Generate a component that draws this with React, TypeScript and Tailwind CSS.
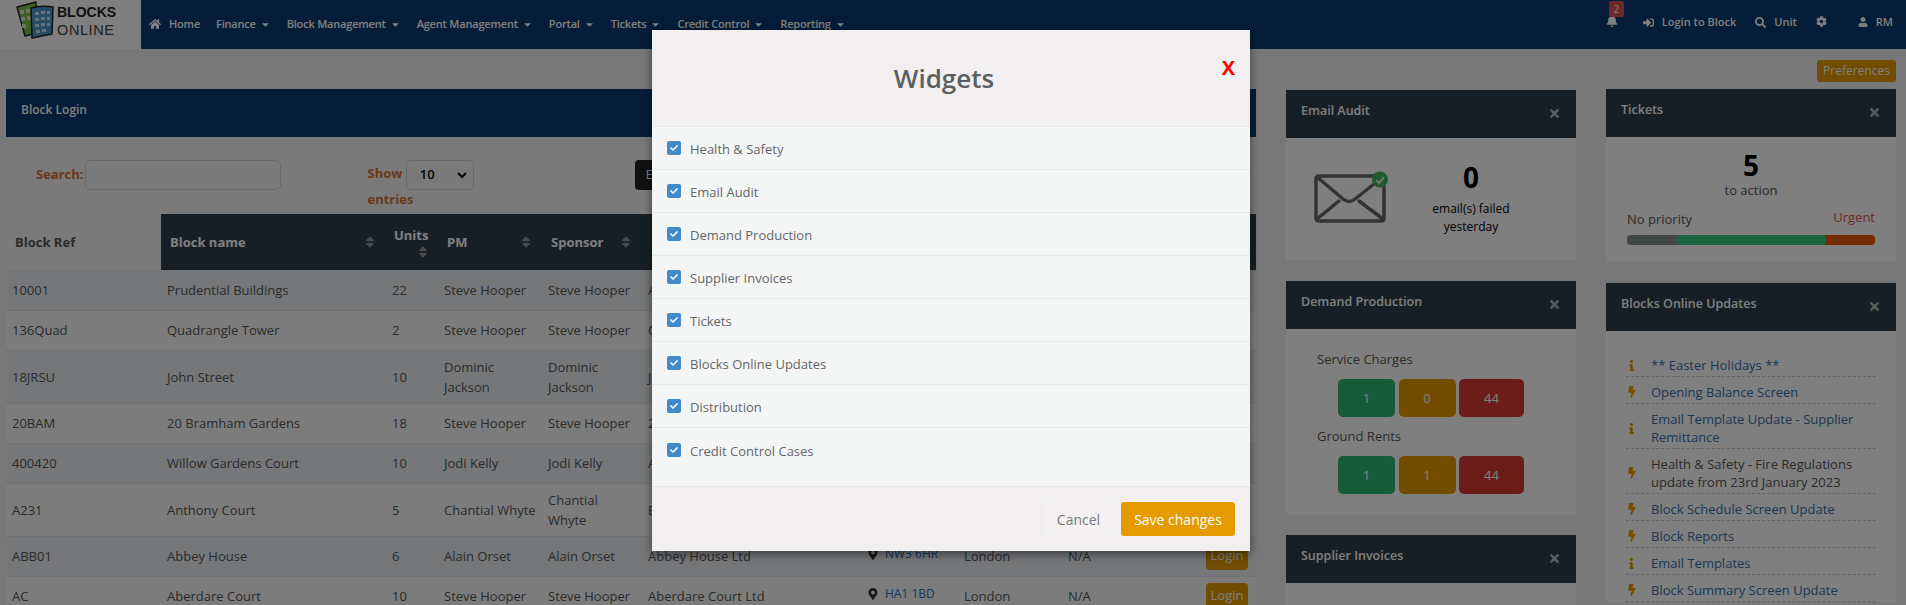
import React from "react"
import {
  FaBell,
  FaBolt,
  FaCaretDown,
  FaCheck,
  FaCog,
  FaHome,
  FaInfo,
  FaMapMarkerAlt,
  FaSearch,
  FaSignInAlt,
  FaSort,
  FaTimes,
  FaUser,
} from "react-icons/fa"

const navItems = [
  "Finance",
  "Block Management",
  "Agent Management",
  "Portal",
  "Tickets",
  "Credit Control",
  "Reporting",
]

const rows = [
  { ref: "10001", name: "Prudential Buildings", units: "22", pm: "Steve Hooper", sponsor: "Steve Hooper", company: "A" },
  { ref: "136Quad", name: "Quadrangle Tower", units: "2", pm: "Steve Hooper", sponsor: "Steve Hooper", company: "Q" },
  { ref: "18JRSU", name: "John Street", units: "10", pm: "Dominic Jackson", sponsor: "Dominic Jackson", company: "J C" },
  { ref: "20BAM", name: "20 Bramham Gardens", units: "18", pm: "Steve Hooper", sponsor: "Steve Hooper", company: "2" },
  { ref: "400420", name: "Willow Gardens Court", units: "10", pm: "Jodi Kelly", sponsor: "Jodi Kelly", company: "A" },
  { ref: "A231", name: "Anthony Court", units: "5", pm: "Chantial Whyte", sponsor: "Chantial Whyte", company: "E" },
  { ref: "ABB01", name: "Abbey House", units: "6", pm: "Alain Orset", sponsor: "Alain Orset", company: "Abbey House Ltd", postcode: "NW3 6HR", city: "London", other: "N/A" },
  { ref: "AC", name: "Aberdare Court", units: "10", pm: "Steve Hooper", sponsor: "Steve Hooper", company: "Aberdare Court Ltd", postcode: "HA1 1BD", city: "London", other: "N/A" },
]

const widgets = [
  "Health & Safety",
  "Email Audit",
  "Demand Production",
  "Supplier Invoices",
  "Tickets",
  "Blocks Online Updates",
  "Distribution",
  "Credit Control Cases",
]

const updates = [
  { icon: "info", text: "** Easter Holidays **", link: true },
  { icon: "bolt", text: "Opening Balance Screen", link: true },
  { icon: "info", text: "Email Template Update - Supplier Remittance", link: true },
  { icon: "bolt", text: "Health & Safety - Fire Regulations update from 23rd January 2023", link: false },
  { icon: "bolt", text: "Block Schedule Screen Update", link: true },
  { icon: "bolt", text: "Block Reports", link: true },
  { icon: "info", text: "Email Templates", link: true },
  { icon: "bolt", text: "Block Summary Screen Update", link: true },
]

const Logo = () => (
  <div className="flex w-[141px] shrink-0 items-start bg-white pl-[16px]">
    <svg width="38" height="38" viewBox="0 0 38 38" className="mt-px shrink-0">
      <path d="M1 6 L20 1 L22 32 L9 35 Z" fill="#7cc04b" stroke="#222" strokeWidth="1.5" strokeLinejoin="round" />
      <path d="M4 9 h4 v4 h-4z M10 8 h4 v4 h-4z M5 16 h4 v4 h-4z M11 15 h4 v4 h-4z M6 23 h4 v4 h-4z" fill="#dfe9cf" />
      <path d="M15 7 Q26 4 37 6 L36 33 Q25 35 16 37 Z" fill="#4a9bd0" stroke="#222" strokeWidth="1.5" strokeLinejoin="round" />
      <path d="M19 11 h4 v3 h-4z M25 10 h4 v3 h-4z M31 10 h3 v3 h-3z M19 17 h4 v3 h-4z M25 16 h4 v3 h-4z M31 16 h3 v3 h-3z M19 23 h4 v3 h-4z M25 22 h4 v3 h-4z M31 22 h3 v3 h-3z M20 29 h4 v3 h-4z M26 28 h4 v3 h-4z" fill="#cfe3f1" />
    </svg>
    <div className="ml-[3px] mt-[4px] font-['Liberation_Sans',sans-serif] text-[#222]">
      <div className="text-[14px] leading-[17px] font-bold">BLOCKS</div>
      <div className="text-[14.5px] leading-[18px] tracking-[0.6px] text-[#444]">ONLINE</div>
    </div>
  </div>
)

const NavBar = () => (
  <header className="flex h-[49px] bg-[#0b3b73] text-white">
    <Logo />
    <nav className="flex items-start gap-4 pl-[8px] pt-[15px] text-[11px] leading-[18px] font-semibold tracking-[-0.2px]">
      <span className="flex items-center gap-2">
        <FaHome className="text-[12px]" />
        Home
      </span>
      {navItems.map((item) => (
        <span key={item} className="flex items-center gap-[4px]">
          {item}
          <FaCaretDown className="text-[11px]" />
        </span>
      ))}
    </nav>
    <div className="ml-auto flex items-start pr-[13px] pt-[13px] text-[11px] leading-[18px] font-semibold">
      <span className="relative mt-[2px] mr-[25px]">
        <FaBell className="text-[12px]" />
        <span className="absolute -top-[14px] left-[3px] flex h-[16px] w-[15px] items-center justify-center rounded-[2px] bg-[#d9534f] text-[10px] font-normal">
          2
        </span>
      </span>
      <span className="flex items-center gap-[8px]">
        <FaSignInAlt className="text-[11px]" />
        Login to Block
      </span>
      <span className="ml-[19px] flex items-center gap-[8px]">
        <FaSearch className="text-[11px]" />
        Unit
      </span>
      <FaCog className="mt-[3px] ml-[19px] text-[11px]" />
      <span className="ml-[31px] flex items-center gap-[8px]">
        <FaUser className="text-[10px]" />
        RM
      </span>
    </div>
  </header>
)

const SortHeader = ({ label, width }: { label: string; width: string }) => (
  <th className={`${width} bg-[#303f49] px-[9px] text-left font-bold text-white`}>
    <div className="flex items-center justify-between">
      {label}
      <FaSort className="text-[14px] text-[#999]" />
    </div>
  </th>
)

const BlockLogin = () => (
  <section className="ml-[6px] w-[1250px] shrink-0 bg-[#f4f4f4]">
    <div className="h-[48px] bg-[#0b3b73] pl-[15px] pt-[11px] text-[12px] leading-[20px] font-semibold text-white">
      Block Login
    </div>
    <div className="flex h-[77px] pl-[30px] pt-[23px] text-[13px] font-bold text-[#e0702a]">
      <label className="flex h-[30px] items-center">
        Search:
        <input className="ml-px h-[30px] w-[196px] rounded-[5px] border border-[#ccd5e0] bg-[#f4f4f4]" />
      </label>
      <div className="ml-[87px] w-[120px]">
        Show{" "}
        <span className="inline-flex h-[30px] w-[68px] items-center justify-between rounded-[5px] border border-[#ccd5e0] pr-[6px] pl-[13px] align-middle text-[13px] font-semibold text-black">
          10
          <svg width="10" height="8" viewBox="0 0 10 8">
            <path d="M1 2 L5 6 L9 2" fill="none" stroke="#000" strokeWidth="2" />
          </svg>
        </span>
        <span className="block">entries</span>
      </div>
      <button className="ml-[147px] h-[30px] w-[70px] rounded-[4px] bg-[#222] pl-[11px] text-left font-normal text-white">
        Export
      </button>
    </div>
    <table className="w-full table-fixed border-collapse font-['Open_Sans',sans-serif] text-[13px] leading-[20px] text-[#555]">
      <thead>
        <tr className="h-[56px]">
          <th className="w-[155px] px-[9px] text-left font-bold text-[#555]">Block Ref</th>
          <SortHeader label="Block name" width="w-[225px]" />
          <th className="w-[52px] bg-[#303f49] px-[8px] text-left font-bold text-white">
            Units
            <FaSort className="ml-auto text-[14px] text-[#999]" />
          </th>
          <SortHeader label="PM" width="w-[104px]" />
          <SortHeader label="Sponsor" width="w-[100px]" />
          <th className="w-[222px] bg-[#303f49]" />
          <th className="w-[94px] bg-[#303f49]" />
          <th className="w-[104px] bg-[#303f49]" />
          <th className="w-[133px] bg-[#303f49]" />
          <th className="bg-[#303f49]" />
        </tr>
      </thead>
      <tbody>
        {rows.map((row, index) => (
          <tr
            key={row.ref}
            className={`border-t border-[#e0e3e6] ${index % 2 === 0 ? "bg-[#eaeef3]" : "bg-[#f9f9f9]"}`}
          >
            <td className="h-[40px] px-[6px] py-[6px]">{row.ref}</td>
            <td className="px-[6px] py-[6px]">{row.name}</td>
            <td className="px-[6px] py-[6px]">{row.units}</td>
            <td className="py-[6px] pl-[6px] pr-[2px]">{row.pm}</td>
            <td className="px-[6px] py-[6px]">{row.sponsor}</td>
            <td className="px-[6px] py-[6px]">{row.company}</td>
            <td className="px-[3px] py-[6px] text-[12px] text-[#2a6ebb]">
              {row.postcode && (
                <span className="flex items-center gap-[6px] pb-[4px]">
                  <FaMapMarkerAlt className="text-[12px] text-[#333]" />
                  {row.postcode}
                </span>
              )}
            </td>
            <td className="px-[6px] py-[6px]">{row.city}</td>
            <td className="px-[6px] py-[6px]">{row.other}</td>
            <td className="px-[6px] pt-[6px] align-top">
              {row.postcode && (
                <button className="ml-[5px] h-[27px] w-[42px] rounded-[4px] bg-[#e59a00] pb-[3px] text-white">Login</button>
              )}
            </td>
          </tr>
        ))}
      </tbody>
    </table>
  </section>
)

const Panel = ({
  title,
  className,
  children,
}: {
  title: string
  className?: string
  children: React.ReactNode
}) => (
  <section className={`w-[290px] bg-white ${className ?? ""}`}>
    <div className="relative h-[48px] bg-[#303f49] pl-[15px] pt-[11px] text-[12.5px] leading-[20px] font-semibold text-white">
      {title}
      <FaTimes className="absolute right-[15px] top-[17px] text-[13px] text-[#bbb]" />
    </div>
    {children}
  </section>
)

const EnvelopeIcon = () => (
  <svg width="78" height="56" viewBox="0 -4 78 56" className="shrink-0">
    <path
      d="M60 2 H5 Q2 2 2 5 V44 Q2 47 5 47 H67 Q70 47 70 44 V13 M3 3 L29 25 Q35 30 41 25 L60 10 M3 45 L25 27 M69 45 L45 27"
      fill="none"
      stroke="#666"
      strokeWidth="3.5"
      strokeLinecap="round"
    />
    <circle cx="66" cy="5.5" r="8" fill="#3cb45c" />
    <path d="M62 6 L65 9 L70 3" fill="none" stroke="#fff" strokeWidth="1.6" />
  </svg>
)

const EmailAudit = () => (
  <Panel title="Email Audit" className="h-[170px]">
    <div className="flex pl-[28px] pt-[32px]">
      <EnvelopeIcon />
      <div className="-mt-[15px] ml-[18px] w-[122px] text-center text-[12px] leading-[18px] text-black">
        <div className="text-[28px] leading-[44px] font-bold">0</div>
        <div className="pt-[1px]">email(s) failed yesterday</div>
      </div>
    </div>
  </Panel>
)

const CountButtons = ({ counts }: { counts: number[] }) => (
  <div className="ml-[52px] flex gap-[3.5px] text-[13px] text-white">
    <span className="flex h-[38px] w-[57px] items-center justify-center rounded-[5px] bg-[#2eb872]">{counts[0]}</span>
    <span className="flex h-[38px] w-[57px] items-center justify-center rounded-[5px] bg-[#e59a00]">{counts[1]}</span>
    <span className="flex h-[38px] w-[65px] items-center justify-center rounded-[5px] bg-[#d93a34]">{counts[2]}</span>
  </div>
)

const DemandProduction = () => (
  <Panel title="Demand Production" className="mt-[21px] h-[233px]">
    <div className="pl-[31px] pt-[20px] text-[13px] leading-[20px] text-[#555]">
      <div className="pb-[10px]">Service Charges</div>
      <div className="-ml-[31px]"><CountButtons counts={[1, 0, 44]} /></div>
      <div className="pb-[10px] pt-[9px]">Ground Rents</div>
      <div className="-ml-[31px]"><CountButtons counts={[1, 1, 44]} /></div>
    </div>
  </Panel>
)

const TicketsPanel = () => (
  <Panel title="Tickets" className="h-[173px]">
    <div className="px-[21px] pt-[10px] text-[13px] text-[#555]">
      <div className="text-center text-[28px] leading-[36px] font-bold text-black">5</div>
      <div className="-mt-[2px] text-center leading-[18px]">to action</div>
      <div className="mt-[9px] flex items-start justify-between leading-[18px]">
        <span className="pt-[2px]">No priority</span>
        <span className="text-[#e0534a]">Urgent</span>
      </div>
      <div className="mt-[7px] flex h-[10px] overflow-hidden rounded-[4px]">
        <div className="w-[50px] bg-[#85918f]" />
        <div className="w-[148px] bg-[#36c97a]" />
        <div className="flex-1 bg-[#e25a00]" />
      </div>
    </div>
  </Panel>
)

const UpdatesPanel = () => (
  <Panel title="Blocks Online Updates" className="mt-[21px]">
    <ul className="px-[20px] pt-[19px] text-[13px] leading-[18px]">
      {updates.map((update) => (
        <li key={update.text} className="flex items-center border-b border-dashed border-[#ccc] pb-[2px] pt-[6px]">
          <span className="w-[25px] shrink-0 text-[#e59a00]">
            {update.icon === "info" ? <FaInfo className="text-[11px]" /> : <FaBolt className="text-[12px]" />}
          </span>
          <span className={update.link ? "text-[#3a6ea5]" : "text-[#555]"}>{update.text}</span>
        </li>
      ))}
    </ul>
  </Panel>
)

const WidgetsModal = () => (
  <div className="absolute left-[652px] top-[30px] w-[598px] bg-[#f4f6f6] shadow-[0_3px_9px_rgba(0,0,0,0.5)]">
    <div className="relative flex h-[97px] items-center justify-center border-b border-[#e6e9ec] bg-[#f1eff0] pr-[14px]">
      <h2 className="text-[26px] font-semibold text-[#5c5f62]">Widgets</h2>
      <span className="absolute right-[15px] top-[23px] text-[20px] leading-[30px] font-bold text-[#ff0000]">X</span>
    </div>
    <div className="h-[359px]">
      {widgets.map((widget, index) => (
        <label
          key={widget}
          className={`flex h-[43px] items-center gap-[9px] pl-[15px] text-[13px] text-[#666] ${index < widgets.length - 1 ? "border-b border-[#e6e9ec]" : ""}`}
        >
          <span className="flex h-[14px] w-[14px] items-center justify-center rounded-[2px] bg-[#428bca] text-white">
            <FaCheck className="text-[8px]" />
          </span>
          <span className="pt-[4px]">{widget}</span>
        </label>
      ))}
    </div>
    <div className="flex h-[65px] items-start justify-end gap-[8px] border-t border-[#e6e9ec] bg-[#f1eff0] pr-[15px] pt-[15px] text-[14px]">
      <button className="h-[34px] w-[69px] rounded-[3px] bg-[#f3f1f2] text-[#777]">Cancel</button>
      <button className="h-[34px] w-[114px] rounded-[3px] bg-[#e59a00] font-medium text-white">Save changes</button>
    </div>
  </div>
)

export default function App() {
  return (
    <div className="relative h-[605px] overflow-hidden bg-[#f0f0f0] font-['Open_Sans',sans-serif]">
      <NavBar />
      <div className="flex h-[33px] items-start justify-end pr-[10px] pt-[11px]">
        <button className="h-[22px] w-[79px] rounded-[3px] bg-[#e59a00] text-[12px] text-white">Preferences</button>
      </div>
      <div className="flex pt-[7px]">
        <BlockLogin />
        <div className="ml-[30px] mt-px shrink-0">
          <EmailAudit />
          <DemandProduction />
          <Panel title="Supplier Invoices" className="mt-[21px]">
            <div className="pt-[16px] text-center text-[28px] font-bold text-black">0</div>
          </Panel>
        </div>
        <div className="ml-[30px] shrink-0">
          <TicketsPanel />
          <UpdatesPanel />
        </div>
      </div>
      <div className="absolute inset-0 bg-black/50" />
      <WidgetsModal />
    </div>
  )
}
